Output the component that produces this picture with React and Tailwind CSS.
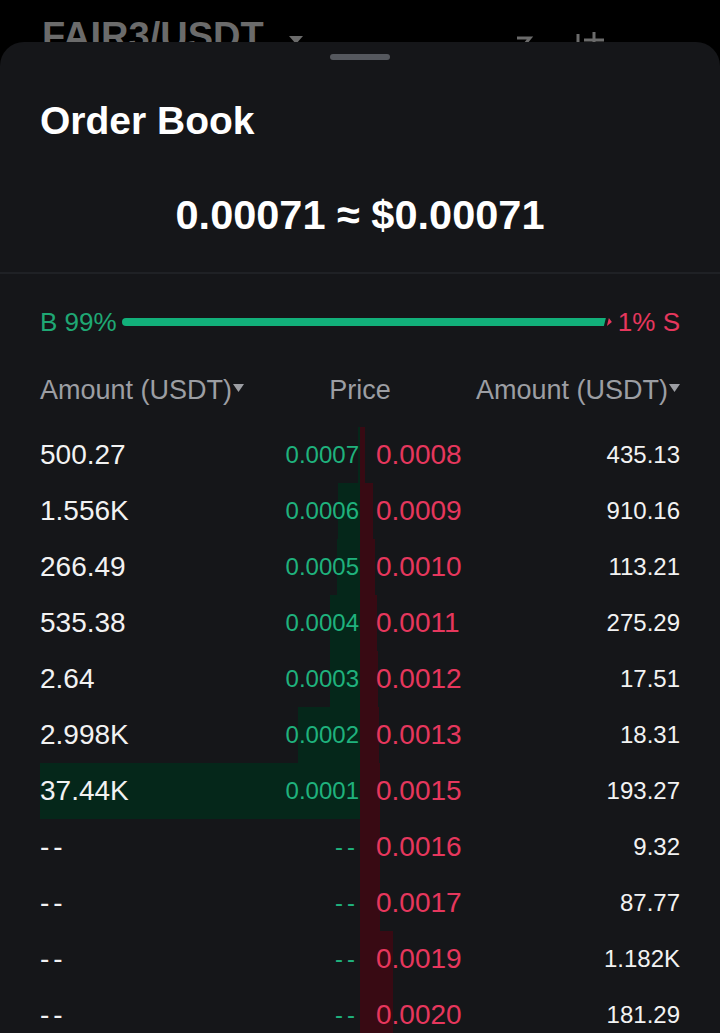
import React from 'react';

const FONT = { fontFamily: '"Liberation Sans", Arial, sans-serif' };

// [left amount, bid price, ask price, right amount, bid depth px, ask depth px]
const ROWS = [
  ['500.27', '0.0007', '0.0008', '435.13', 2, 5],
  ['1.556K', '0.0006', '0.0009', '910.16', 22, 13],
  ['266.49', '0.0005', '0.0010', '113.21', 23, 15],
  ['535.38', '0.0004', '0.0011', '275.29', 30, 17],
  ['2.64', '0.0003', '0.0012', '17.51', 30, 18],
  ['2.998K', '0.0002', '0.0013', '18.31', 62, 19],
  ['37.44K', '0.0001', '0.0015', '193.27', 320, 20],
  [null, null, '0.0016', '9.32', 0, 20],
  [null, null, '0.0017', '87.77', 0, 20],
  [null, null, '0.0019', '1.182K', 0, 33],
  [null, null, '0.0020', '181.29', 0, 33],
];

const Dash = () => <span className="tracking-[4px]">--</span>;

function Row({ row }) {
  const [amtL, bid, ask, amtR, bidW, askW] = row;
  return (
    <div className="relative grid h-[56px] grid-cols-2 items-center">
      <div className="absolute inset-y-0 right-1/2 bg-[#05271a]" style={{ width: bidW }} />
      <div className="absolute inset-y-0 left-1/2 bg-[#380a13]" style={{ width: askW }} />
      <div className="relative flex items-center justify-between pr-[1px]">
        <span className="text-[28px] text-[#f2f2f2]">{amtL ?? <Dash />}</span>
        <span className="text-[24px] text-[#1fb27d]">{bid ?? <Dash />}</span>
      </div>
      <div className="relative flex items-center justify-between pl-[16px]">
        <span className="text-[28px] text-[#e6375d]">{ask}</span>
        <span className="text-[24px] text-[#f2f2f2]">{amtR}</span>
      </div>
    </div>
  );
}

function Caret() {
  return (
    <svg width="11" height="8" viewBox="0 0 11 8" className="ml-[1px] -mt-[4px]">
      <path d="M0 0 H11 L5.5 8 Z" fill="#9c9ea3" />
    </svg>
  );
}

export default function App() {
  return (
    <div className="h-[1033px] w-[720px] overflow-hidden bg-black" style={FONT}>
      {/* dimmed page behind the sheet */}
      <div className="relative h-[42px] overflow-hidden">
        <div className="flex items-start pl-[42px] pt-[14px]">
          <span className="text-[38px] font-bold leading-[44px] text-[#6b6b6b]">FAIR3/USDT</span>
          <svg width="16" height="10" viewBox="0 0 16 10" className="ml-[24px] mt-[21px]">
            <path d="M1 1 L15 1 L8 9 Z" fill="#6b6b6b" />
          </svg>
        </div>
        <svg width="120" height="20" viewBox="0 0 120 20" className="absolute left-[510px] top-[30px]">
          <path d="M7 8 H20 L10 20" stroke="#6b6b6b" strokeWidth="3" fill="none" />
          <path d="M68 4 V20" stroke="#6b6b6b" strokeWidth="3" />
          <path d="M84 2 V20 M74 10 H94" stroke="#6b6b6b" strokeWidth="3" />
        </svg>
      </div>

      {/* bottom sheet */}
      <div className="h-[991px] rounded-t-[24px] bg-[#151619]">
        <div className="flex justify-center pt-[12px]">
          <div className="h-[6px] w-[60px] rounded-full bg-[#55585e]" />
        </div>

        <div className="mt-[39px] flex h-[44px] items-center px-10">
          <h1 className="text-[39px] font-bold text-white">Order Book</h1>
        </div>

        <div className="mt-[48px] flex h-[48px] items-center justify-center">
          <span className="text-[41.5px] font-bold text-white">0.00071 ≈ $0.00071</span>
        </div>

        <div className="mt-[33px] h-[2px] bg-[#1f2125]" />

        {/* buy / sell ratio */}
        <div className="mt-[33px] flex h-[30px] items-center px-10">
          <span className="text-[26px] text-[#1fa874]">B 99%</span>
          <div className="ml-[5px] h-[8px] flex-1 rounded-l-full bg-[#12b07a] [clip-path:polygon(0_0,100%_0,calc(100%-2px)_100%,0_100%)]" />
          <div className="ml-[1px] h-[8px] w-[5px] bg-[#e6375d] [clip-path:polygon(2px_0,100%_50%,0_100%)]" />
          <span className="ml-[6px] text-[26px] text-[#e6375d]">1% S</span>
        </div>

        {/* column headers */}
        <div className="mt-[33px] grid h-[40px] grid-cols-[1fr_auto_1fr] items-center px-10 text-[27px] text-[#9c9ea3]">
          <span className="flex items-center justify-self-start">
            Amount (USDT)
            <Caret />
          </span>
          <span>Price</span>
          <span className="flex items-center justify-self-end">
            Amount (USDT)
            <Caret />
          </span>
        </div>

        <div className="mt-[17px] px-10">
          {ROWS.map((r, i) => (
            <Row key={i} row={r} />
          ))}
        </div>
      </div>
    </div>
  );
}
